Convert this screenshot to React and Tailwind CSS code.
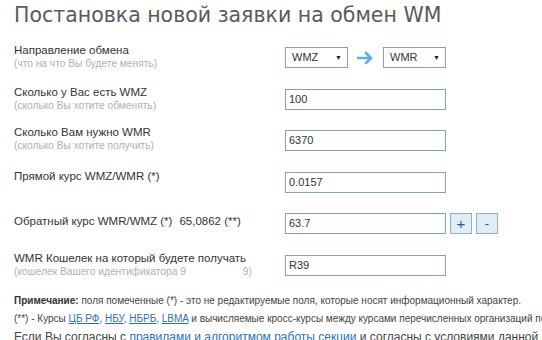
import React from "react";

const inputCls =
  "h-[21px] border border-[#7fa3b4] bg-white px-[3px] text-[11px] leading-[19px] text-[#333] flex items-center";

function Select({ value }) {
  return (
    <div className={`${inputCls} w-[63px] justify-between pl-[6px] pr-[5px]`}>
      <span>{value}</span>
      <span className="text-[7px] text-[#222]">▼</span>
    </div>
  );
}

function Field({ value, width = "w-[161px]" }) {
  return <div className={`${inputCls} ${width}`}>{value}</div>;
}

function Label({ title, sub, className = "" }) {
  return (
    <div className={`w-[271px] shrink-0 ${className}`}>
      <div className="text-[11.5px] leading-[14px] text-[#333]">{title}</div>
      {sub && <div className="text-[10.2px] leading-[14px] text-[#b0b0b0]">{sub}</div>}
    </div>
  );
}

export default function App() {
  return (
    <div className="w-[542px] h-[340px] overflow-hidden bg-white pl-[14px] font-['Liberation_Sans',Arial,sans-serif]">
      {/* title */}
      <h1 className="pt-[1px] h-[47px] text-[20.5px] leading-[28px] text-[#5a5a5a] font-['DejaVu_Sans',Verdana,sans-serif] whitespace-nowrap">
        Постановка новой заявки на обмен WM
      </h1>

      {/* form rows */}
      <div className="flex flex-col gap-[20.6px]">
        <div className="flex h-[21px] items-start">
          <Label className="-mt-[4px]" title="Направление обмена" sub="(что на что Вы будете менять)" />
          <div className="flex items-center">
            <Select value="WMZ" />
            <svg className="mx-[9px]" width="17" height="14" viewBox="0 0 17 14" fill="none">
              <path d="M1 7h13M9 2l5 5-5 5" stroke="#5ab0e6" strokeWidth="2.6" strokeLinecap="round" strokeLinejoin="round" />
            </svg>
            <Select value="WMR" />
          </div>
        </div>

        <div className="flex h-[21px] items-start">
          <Label className="-mt-[4px]" title="Сколько у Вас есть WMZ" sub="(сколько Вы хотите обменять)" />
          <Field value="100" />
        </div>

        <div className="flex h-[21px] items-start">
          <Label className="-mt-[5px]" title="Сколько Вам нужно WMR" sub="(сколько Вы хотите получить)" />
          <Field value="6370" />
        </div>

        <div className="flex h-[21px] items-start">
          <Label className="-mt-[3px]" title="Прямой курс WMZ/WMR (*)" />
          <Field value="0.0157" />
        </div>

        <div className="flex h-[21px] items-start">
          <div className="w-[271px] shrink-0 mt-[1px] text-[11.5px] leading-[14px] text-[#333]">
            Обратный курс WMR/WMZ (*)<span className="ml-[7px]">65,0862 (**)</span>
          </div>
          <Field value="63.7" />
          <div className="ml-[4px] flex gap-[4px]">
            <div className="w-[22px] h-[21px] border border-[#8fb0c8] bg-[#e1edf6] flex items-center justify-center text-[15px] leading-none text-[#1d5c96]">+</div>
            <div className="w-[22px] h-[21px] border border-[#8fb0c8] bg-[#e1edf6] flex items-center justify-center text-[13px] leading-none text-[#1d5c96]">-</div>
          </div>
        </div>

        <div className="flex h-[21px] items-start">
          <div className="w-[271px] shrink-0 -mt-[4px]">
            <div className="text-[11.5px] leading-[14px] text-[#333]">WMR Кошелек на который будете получать</div>
            <div className="text-[10.2px] leading-[14px] text-[#b0b0b0]">
              (кошелек Вашего идентификатора 9<span className="inline-block w-[57px]" />9)
            </div>
          </div>
          <Field value="R39" />
        </div>
      </div>

      {/* notes */}
      <div className="mt-[16px] text-[10px] leading-[18px] text-[#444] whitespace-nowrap">
        <p>
          <b className="text-[#333]">Примечание:</b> поля помеченные (*) - это не редактируемые поля, которые носят информационный характер.
        </p>
        <p>
          (**) - Курсы <a className="text-[#2a72b8] underline">ЦБ РФ</a>, <a className="text-[#2a72b8] underline">НБУ</a>,{" "}
          <a className="text-[#2a72b8] underline">НБРБ</a>, <a className="text-[#2a72b8] underline">LBMA</a> и вычисляемые кросс-курсы между курсами перечисленных организаций по
        </p>
        <p className="mt-[1px] text-[12px] leading-[16px] text-[#444]">
          Если Вы согласны с <a className="text-[#2a72b8] underline">правилами и алгоритмом работы секции</a> и согласны с условиями данной сделки
        </p>
      </div>
    </div>
  );
}
